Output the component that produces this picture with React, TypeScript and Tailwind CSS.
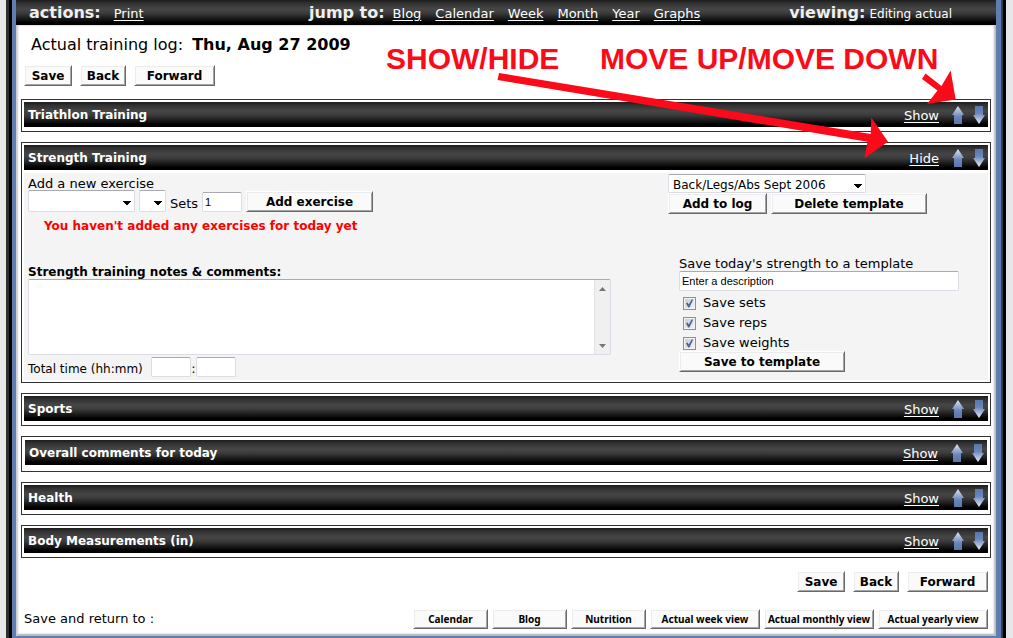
import { useState } from "react";
import type { ButtonHTMLAttributes, InputHTMLAttributes, ReactNode } from "react";
import { clsx } from "clsx";

const bar =
  "bg-[linear-gradient(to_bottom,#1c1c1c_0%,#303030_12%,#464646_36%,#3c3c3c_52%,#1a1a1a_74%,#000_90%)]";

const field =
  "rounded-[2px] border border-[#dcdce4] border-t-[#a9a9b0] bg-white text-black outline-none";

const Button = ({ className, ...props }: ButtonHTMLAttributes<HTMLButtonElement>) => (
  <button
    type="button"
    className={clsx(
      "flex shrink-0 items-center justify-center whitespace-nowrap border border-t-white border-l-white border-r-[#696969] border-b-[#696969] bg-[#fafafa] font-bold text-black shadow-[inset_1px_1px_0_#ececec,inset_-1px_-1px_0_#a4a4a4]",
      className
    )}
    {...props}
  />
);

const SaveButtons = () => (
  <div className="flex gap-2 text-[12px]">
    <Button className="h-[21px] w-12">Save</Button>
    <Button className="h-[21px] w-[46px]">Back</Button>
    <Button className="h-[21px] w-[81px]">Forward</Button>
  </div>
);

interface SelectBoxProps {
  label: string;
  options: string[];
  className?: string;
}

const SelectBox = ({ label, options, className }: SelectBoxProps) => (
  <div className={clsx("relative shrink-0", className)}>
    <select
      aria-label={label}
      className={clsx(field, "block h-full w-full appearance-none pl-1 text-[12px]")}
    >
      {options.map((option) => (
        <option key={option}>{option}</option>
      ))}
    </select>
    <svg
      viewBox="0 0 8 4"
      className="pointer-events-none absolute top-1/2 right-1 h-1 w-2 fill-black"
      shapeRendering="crispEdges"
    >
      <path d="M0 0h8v1h-1v1h-1v1h-1v1h-2v-1h-1v-1h-1v-1h-1z" />
    </svg>
  </div>
);

const SmallInput = (props: InputHTMLAttributes<HTMLInputElement>) => (
  <input
    type="text"
    className={clsx(field, "h-5 w-10 shrink-0 px-0.5 font-['Liberation_Sans'] text-[11px]")}
    {...props}
  />
);

const Checkbox = ({ label }: { label: string }) => (
  <label className="flex h-5 items-center pl-1">
    <span className="relative mr-[7px] h-[13px] w-[13px]">
      <input
        type="checkbox"
        defaultChecked
        className="peer block h-[13px] w-[13px] appearance-none border border-[#8e8f8f] bg-[linear-gradient(135deg,#c5c9d1,#f4f5f6)] shadow-[inset_0_0_0_1px_#f4f4f4]"
      />
      <svg
        viewBox="0 0 13 13"
        className="pointer-events-none absolute inset-0 hidden fill-[#4a619b] peer-checked:block"
      >
        <path d="M3 6.2 4.6 5.4 5.8 7.6 8.6 2.6 10.2 2.6 6.4 10.4 5.2 10.4Z" />
      </svg>
    </span>
    {label}
  </label>
);

const MoveArrow = ({ down }: { down?: boolean }) => (
  <button type="button" aria-label={down ? "Move down" : "Move up"} className="block">
    <svg viewBox="0 0 12 18" className="block h-[18px] w-3">
      <defs>
        <linearGradient id="arrow-up" x1="0" y1="0" x2="0" y2="1">
          <stop offset="0" stopColor="#dfe7f3" />
          <stop offset="0.6" stopColor="#6a86b9" />
          <stop offset="1" stopColor="#5877ae" />
        </linearGradient>
        <linearGradient id="arrow-down" x1="0" y1="0" x2="0" y2="1">
          <stop offset="0" stopColor="#5877ae" />
          <stop offset="0.4" stopColor="#6a86b9" />
          <stop offset="1" stopColor="#e6ecf6" />
        </linearGradient>
      </defs>
      {down ? (
        <path fill="url(#arrow-down)" d="M2 0h8v9h2L6 18 0 9h2z" />
      ) : (
        <path fill="url(#arrow-up)" d="M6 0l6 9h-2v9H2V9H0z" />
      )}
    </svg>
  </button>
);

interface PanelProps {
  title: string;
  loose?: boolean;
  open?: boolean;
  children?: ReactNode;
}

const Panel = ({ title, loose, open = false, children }: PanelProps) => {
  const [isOpen, setIsOpen] = useState(open);

  return (
    <section
      className={clsx("border border-[#333] bg-white", loose ? "px-[3px] pt-[3px] pb-1.5" : "p-0.5")}
    >
      <header className={clsx(bar, "flex h-[25px] items-center pr-[3px] pl-1 text-white")}>
        <h2 className="text-[12px] font-bold">{title}</h2>
        <a
          href="#"
          className="mt-0.5 mr-[13px] ml-auto text-[13px] underline underline-offset-2"
          onClick={(e) => {
            e.preventDefault();
            setIsOpen(!isOpen);
          }}
        >
          {isOpen ? "Hide" : "Show"}
        </a>
        <div className="flex gap-[9px]">
          <MoveArrow />
          <MoveArrow down />
        </div>
      </header>
      {isOpen && children ? (
        <div className="mt-[3px] bg-[#f4f4f4]">{children}</div>
      ) : (
        !loose && <div className="h-0.5" />
      )}
    </section>
  );
};

const StrengthForm = () => (
  <div className="flex h-[207px] justify-between pl-1 text-[13px] leading-5">
    <div className="w-[583px]">
      <p className="h-[17px] leading-[22px]">Add a new exercise</p>
      <div className="flex items-end">
        <SelectBox label="Exercise group" options={[""]} className="mr-1 h-[22px] w-[107px]" />
        <SelectBox label="Exercise" options={[""]} className="mr-1 h-[22px] w-[27px]" />
        <label htmlFor="sets" className="mr-1 h-[18px] w-7">
          Sets
        </label>
        <SmallInput id="sets" defaultValue="1" />
        <Button className="ml-1 h-[21px] w-[127px] text-[12px]">Add exercise</Button>
      </div>
      <p className="mt-1 ml-4 text-[12px] font-bold text-[#f00]">
        You haven't added any exercises for today yet
      </p>
      <label htmlFor="notes" className="mt-6 block h-[19px] text-[12px] leading-6 font-bold">
        Strength training notes &amp; comments:
      </label>
      <div className={clsx(field, "flex h-[76px]")}>
        <textarea id="notes" className="min-w-0 flex-1 resize-none p-1 text-[12px] outline-none" />
        <div className="flex w-4 flex-col items-center justify-between border-l border-[#e2e2e2] bg-[#f0f0f0] pt-[7px] pb-1.5">
          <svg viewBox="0 0 7 4" className="h-1 w-[7px] fill-[#777]">
            <path d="M3.5 0 7 4H0z" />
          </svg>
          <svg viewBox="0 0 7 4" className="h-1 w-[7px] fill-[#777]">
            <path d="M0 0h7L3.5 4z" />
          </svg>
        </div>
      </div>
      <div className="mt-0.5 flex items-start">
        <label htmlFor="hours" className="mr-1 h-5 w-[119px] text-[12px] leading-6 whitespace-nowrap">
          Total time (hh:mm)
        </label>
        <SmallInput id="hours" />
        <span className="h-5 w-[5px] text-center leading-6">:</span>
        <SmallInput aria-label="Minutes" />
      </div>
    </div>

    <div className="w-80 pt-px">
      <SelectBox
        label="Template"
        options={["Back/Legs/Abs Sept 2006"]}
        className="h-[19px] w-[198px]"
      />
      <div className="flex gap-1 text-[12px]">
        <Button className="h-[21px] w-[99px]">Add to log</Button>
        <Button className="h-[21px] w-[156px]">Delete template</Button>
      </div>
      <div className="mt-10 ml-[11px]">
        <label htmlFor="description" className="block h-[17px]">
          Save today's strength to a template
        </label>
        <input
          id="description"
          type="text"
          defaultValue="Enter a description"
          className={clsx(field, "block h-5 w-[280px] px-0.5 font-['Liberation_Sans'] text-[11px]")}
        />
        <div className="pt-0.5">
          <Checkbox label="Save sets" />
          <Checkbox label="Save reps" />
          <Checkbox label="Save weights" />
        </div>
        <Button className="-mt-0.5 h-[21px] w-[166px] text-[12px]">Save to template</Button>
      </div>
    </div>
  </div>
);

const jumpLinks = ["Blog", "Calendar", "Week", "Month", "Year", "Graphs"];
const returnViews = ["Calendar", "Blog", "Nutrition"];
const actualViews = ["Actual week view", "Actual monthly view", "Actual yearly view"];

const NavTitle = ({ children }: { children: ReactNode }) => (
  <span className="text-[16px] leading-6 font-bold whitespace-nowrap text-[#eee]">{children}</span>
);

const Notes = () => (
  <div className="pointer-events-none absolute top-0 right-0 h-[170px] w-[627px] font-['Liberation_Sans'] text-[30px] leading-[46px] font-bold text-[#fb0a19]">
    <span className="absolute top-9 left-0 whitespace-nowrap">SHOW/HIDE</span>
    <span className="absolute top-9 left-[214px] whitespace-nowrap">MOVE UP/MOVE DOWN</span>
    <svg viewBox="386 0 627 170" className="absolute inset-0 h-full w-full fill-[#fb0a19]">
      <path d="M499 73 870.7 134 871.3 117.5 888 141.7 864.5 158.3 867.5 141.7 497.5 80Z" />
      <path d="M925.5 73.5 941.5 86 950.6 70.5 955.7 99.6 927 104 937.5 90.6 922 79Z" />
    </svg>
  </div>
);

export default function App() {
  return (
    <div className="relative min-h-screen overflow-hidden bg-[#e7e7e9] pr-[7px] pl-1.5 font-['DejaVu_Sans',sans-serif] text-[13px] text-black">
      <div className="border-r-[3px] border-l-[3px] border-r-black border-l-[#2c2f2f]">
        <div className="border-r-2 border-l-[3px] border-r-[#343b4a] border-l-black">
          <div className="border-r-[5px] border-b-2 border-l-4 border-[#5f7db1] bg-white">
            <nav className={clsx(bar, "flex h-[25px] items-center pr-11 pl-[13px] text-[13px] text-white")}>
              <div className="flex w-[280px] items-center gap-[13px]">
                <NavTitle>actions:</NavTitle>
                <a href="#" className="mt-0.5 underline underline-offset-2">
                  Print
                </a>
              </div>
              <div className="flex items-center gap-2">
                <NavTitle>jump to:</NavTitle>
                <div className="mt-0.5 flex gap-3.5">
                  {jumpLinks.map((link) => (
                    <a key={link} href="#" className="underline underline-offset-2">
                      {link}
                    </a>
                  ))}
                </div>
              </div>
              <div className="ml-auto flex items-center gap-1">
                <NavTitle>viewing:</NavTitle>
                <span className="mt-0.5 text-[12px] whitespace-nowrap">Editing actual</span>
              </div>
            </nav>

            <main className="pr-[5px] pb-[7px] pl-[5px] shadow-[inset_2px_0_2px_#ccc,inset_-2px_0_2px_#bbb,inset_0_-2px_2px_#aaa]">
              <h1 className="pt-2 pl-2.5 text-[16px] leading-6">
                Actual training log: <b className="ml-1">Thu, Aug 27 2009</b>
              </h1>
              <div className="mt-2 ml-[3px]">
                <SaveButtons />
              </div>

              <div className="mt-[13px] flex flex-col gap-2.5">
                <Panel title="Triathlon Training" />
                <Panel title="Strength Training" open>
                  <StrengthForm />
                </Panel>
                <Panel title="Sports" />
                <Panel title="Overall comments for today" loose />
                <Panel title="Health" />
                <Panel title="Body Measurements (in)" />
              </div>

              <div className="mt-[13px] mr-[3px] flex justify-end">
                <SaveButtons />
              </div>
              <div className="mt-[17px] mr-[3px] ml-[3px] flex items-center justify-between">
                <span>Save and return to :</span>
                <div className="flex gap-1 font-['Noto_Sans'] text-[10px]">
                  {returnViews.map((view) => (
                    <Button key={view} className="h-5 w-[75px]">
                      {view}
                    </Button>
                  ))}
                  {actualViews.map((view) => (
                    <Button key={view} className="h-5 w-[110px]">
                      {view}
                    </Button>
                  ))}
                </div>
              </div>
            </main>
          </div>
        </div>
      </div>
      <Notes />
    </div>
  );
}
